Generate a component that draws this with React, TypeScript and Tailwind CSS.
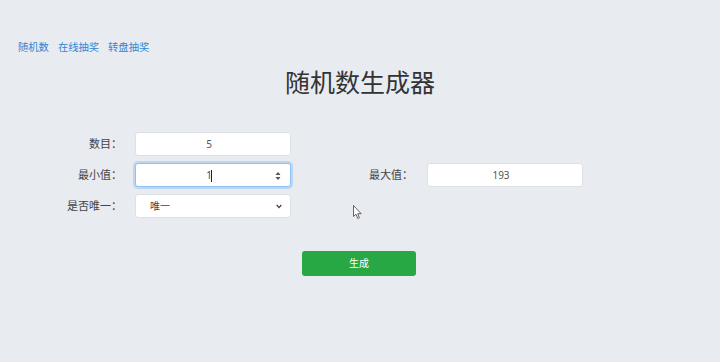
import React from 'react';

const font = { fontFamily: '"Noto Sans", "Noto Sans CJK SC", sans-serif' };

function Label({ text }: { text: string }) {
    return <div className="w-[122px] text-right text-[11px] text-[#444]">{text}</div>;
}

function Field({ value }: { value: string }) {
    return (
        <input
            readOnly
            value={value}
            className="block w-[156px] h-[24px] bg-white border border-[#dde1e6] rounded-[3px] pr-[8px] text-center text-[10px] text-[#555] outline-none"
        />
    );
}

export default function App() {
    return (
        <div className="relative w-[720px] h-[362px] bg-[#e8ebf0] overflow-hidden" style={font}>
            {/* top links */}
            <div className="flex gap-[9px] pl-[18px] pt-[40px] text-[10.3px] text-[#2f86d6]">
                <a href="#">随机数</a>
                <a href="#">在线抽奖</a>
                <a href="#">转盘抽奖</a>
            </div>

            <h1 className="mt-[10px] text-center text-[25px] leading-[34px] text-[#333]">随机数生成器</h1>

            <div className="mt-[33px] flex flex-col gap-[7px]">
                <div className="flex items-center h-[24px]">
                    <Label text="数目：" />
                    <div className="ml-[13px]">
                        <Field value="5" />
                    </div>
                </div>

                <div className="flex items-center h-[24px]">
                    <Label text="最小值：" />
                    <div className="ml-[13px] relative w-[156px] h-[24px] bg-white border border-[#8fc1f5] rounded-[3px] shadow-[0_0_0_2px_rgba(0,123,255,0.18)] flex items-center justify-center text-[10px] text-[#444]">
                        <span className="pr-[8px]">1</span>
                        <span className="absolute left-[75px] top-[6px] w-px h-[12px] bg-[#222]" />
                        <svg className="absolute right-[9px] top-[7px]" width="6" height="10" viewBox="0 0 6 10">
                            <path d="M0.5 4 L3 1 L5.5 4 Z" fill="#555" />
                            <path d="M0.5 6 L3 9 L5.5 6 Z" fill="#555" />
                        </svg>
                    </div>
                    <Label text="最大值：" />
                    <div className="ml-[14px]">
                        <Field value="193" />
                    </div>
                </div>

                <div className="flex items-center h-[24px]">
                    <Label text="是否唯一：" />
                    <div className="ml-[13px] relative">
                        <select
                            defaultValue="唯一"
                            className="block appearance-none w-[156px] h-[24px] bg-white border border-[#dde1e6] rounded-[3px] pl-[14px] text-[10px] text-[#444] outline-none"
                        >
                            <option>唯一</option>
                            <option>不唯一</option>
                        </select>
                        <svg className="absolute right-[9px] top-[10px] pointer-events-none" width="6" height="5" viewBox="0 0 6 5">
                            <path d="M0.7 1 L3 3.6 L5.3 1" stroke="#444" strokeWidth="1.3" fill="none" />
                        </svg>
                    </div>
                </div>
            </div>

            <div className="mt-[33px] flex justify-center">
                <button className="ml-[-2px] w-[114px] h-[25px] bg-[#28a745] rounded-[3px] text-white text-[10px]">生成</button>
            </div>

            {/* mouse pointer */}
            <svg className="absolute left-[353px] top-[205px]" width="10" height="15" viewBox="0 0 10 15">
                <path d="M0.5 0.5 L0.5 11.5 L3 9.2 L4.8 13.5 L6.4 12.8 L4.7 8.7 L8.2 8.7 Z" fill="#fff" stroke="#555" strokeWidth="0.9" strokeLinejoin="round" />
            </svg>
        </div>
    );
}
